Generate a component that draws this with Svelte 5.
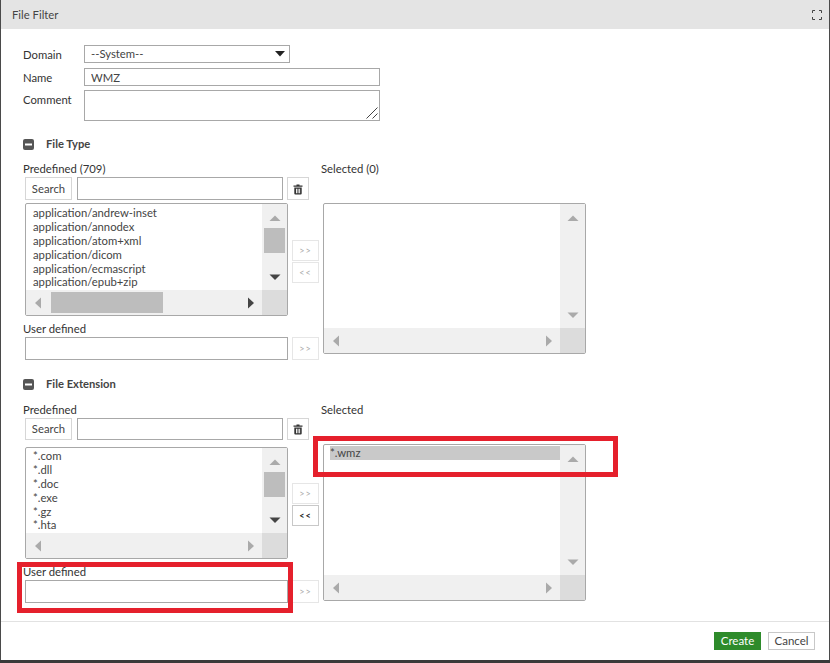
<script>
  const types = ['application/andrew-inset','application/annodex','application/atom+xml','application/dicom','application/ecmascript','application/epub+zip'];
  const exts = ['*.com','*.dll','*.doc','*.exe','*.gz','*.hta'];
</script>

{#snippet tri(dir, tone)}
  <svg class="tri {tone}" viewBox="0 0 12 12" width="12" height="12" aria-hidden="true">
    {#if dir === 'up'}<path d="M0.5 9L11.5 9L6 3.5Z" />
    {:else if dir === 'down'}<path d="M0.5 3.5L11.5 3.5L6 9Z" />
    {:else if dir === 'left'}<path d="M9 0.5L9 11.5L3 6Z" />
    {:else}<path d="M3 0.5L3 11.5L9 6Z" />{/if}
  </svg>
{/snippet}

{#snippet scrollbox(items, sel, vthumb, hthumb, downTone, rightTone, cls)}
  <div class="box {cls}">
    <div class="items">
      {#each items as it}<div class="item">{it}</div>{/each}
      {#if sel}<div class="item sel">{sel}</div>{/if}
    </div>
    <div class="vbar">
      {@render tri('up', 'light')}
      {#if vthumb}<div class="vthumb"></div>{/if}
      <span class="vdown">{@render tri('down', downTone)}</span>
    </div>
    <div class="hbar">
      {@render tri('left', 'light')}
      {#if hthumb}<div class="hthumb"></div>{/if}
      <span class="hright">{@render tri('right', rightTone)}</span>
    </div>
    <div class="corner"></div>
  </div>
{/snippet}

{#snippet trash()}
  <svg viewBox="0 0 12 12" width="12" height="12" aria-hidden="true">
    <path d="M4.5 1.5h3v1h3v1.2h-9V2.500h3z" fill="#333"/>
    <path fill-rule="evenodd" d="M2.300 4.500h7.400v6a1 1 0 0 1-1 1h-5.400a1 1 0 0 1-1-1zM4 5.700v4.500h.9V5.700zM5.600 5.700v4.500h.9V5.700zM7.200 5.700v4.500h.9V5.700z" fill="#333"/>
  </svg>
{/snippet}

{#snippet minus()}
  <svg class="minus" viewBox="0 0 11 11" width="11" height="11" aria-hidden="true">
    <rect width="11" height="11" rx="2" fill="#555"/>
    <rect x="2" y="4.500" width="7" height="2" fill="#fff"/>
  </svg>
{/snippet}

<div class="win">
  <header class="head">
    <span>File Filter</span>
    <svg viewBox="0 0 10 10" width="10" height="10" aria-hidden="true">
      <path d="M0.500 3V0.500H3M7 0.500H9.500V3M9.500 7V9.500H7M3 9.500H0.500V7" fill="none" stroke="#444" stroke-width="1"/>
    </svg>
  </header>

  <main class="body">
    <div class="form">
      <label for="d" class="l1">Domain</label>
      <div class="select" id="d"><span>--System--</span>
        <svg viewBox="0 0 10 6" width="10" height="6" aria-hidden="true"><path d="M0 0H10L5 5.500Z" fill="#222"/></svg>
      </div>
      <label for="n" class="l1">Name</label>
      <input id="n" class="wide" value="WMZ" />
      <label for="c" class="top">Comment</label>
      <div class="area">
        <textarea id="c"></textarea>
        <svg class="grip" viewBox="0 0 12 12" width="12" height="12" aria-hidden="true"><path d="M0.500 11.500L11.500 0.500M6.500 11.500L11.500 6.500" stroke="#444" stroke-width="1" fill="none"/></svg>
      </div>
    </div>

    <h3 class="sec first">{@render minus()}File Type</h3>
    <div class="transfer">
      <div>
        <div class="lab">Predefined (709)</div>
        <div class="search s1">
          <button class="btn">Search</button>
          <input class="q" />
          <button class="btn ic">{@render trash()}</button>
        </div>
        <div class="mid m1">
          {@render scrollbox(types, null, true, true, 'dark', 'dark', 'b1')}
          <div class="arrows a1">
            <button class="arr">&gt;&gt;</button>
            <button class="arr">&lt;&lt;</button>
          </div>
        </div>
        <div class="lab ud">User defined</div>
        <div class="udrow">
          <input class="udin" />
          <button class="arr">&gt;&gt;</button>
        </div>
      </div>
      <div>
        <div class="lab">Selected (0)</div>
        <div class="rbox r1">{@render scrollbox([], null, false, false, 'light', 'light', 'b2')}</div>
      </div>
    </div>

    <h3 class="sec second">{@render minus()}File Extension</h3>
    <div class="transfer">
      <div>
        <div class="lab">Predefined</div>
        <div class="search s2">
          <button class="btn">Search</button>
          <input class="q" />
          <button class="btn ic">{@render trash()}</button>
        </div>
        <div class="mid m2">
          {@render scrollbox(exts, null, true, false, 'dark', 'light', 'b3')}
          <div class="arrows a2">
            <button class="arr">&gt;&gt;</button>
            <button class="arr on">&lt;&lt;</button>
          </div>
        </div>
        <div class="lab ud">User defined</div>
        <div class="udrow">
          <input class="udin" />
          <button class="arr">&gt;&gt;</button>
        </div>
      </div>
      <div>
        <div class="lab">Selected</div>
        <div class="rbox r2">{@render scrollbox([], '*.wmz', false, false, 'light', 'light', 'b4')}</div>
      </div>
    </div>
  </main>

  <footer class="foot">
    <button class="create">Create</button>
    <button class="cancel">Cancel</button>
  </footer>

  <div class="mark m-sel"></div>
  <div class="mark m-ud"></div>
</div>

<style>
  :global(body) { margin: 0; background: #3a3a3a; }
  .win {
    position: relative; box-sizing: border-box; width: 830px; height: 660px;
    background: #fff; border-left: 1px solid #4a4a4a; border-right: 1px solid #4a4a4a;
    display: flex; flex-direction: column;
    font: 11.3px/16px Lato, "Liberation Sans", sans-serif; color: #333;
  }
  .head {
    height: 29px; flex: none; background: #e4e4e4; display: flex; align-items: center;
    justify-content: space-between; padding: 0 7px 0 11px; color: #444;
  }
  .body { flex: 1; padding: 16px 0 0 22px; }
  .form { display: grid; grid-template-columns: 61px 1fr; grid-template-rows: 18px 18px 30px; row-gap: 5px; }
  .form label { height: 18px; line-height: 20px; }
  .form label.top { line-height: 18px; }
  .select {
    box-sizing: border-box; width: 206px; height: 18px; border: 1px solid #a8a8a8;
    display: flex; align-items: center; justify-content: space-between; padding: 0 4px 0 6px; color: #444;
  }
  input, textarea {
    box-sizing: border-box; border: 1px solid #a8a8a8; background: #fff; border-radius: 0; outline: none;
    font: inherit; color: #444; margin: 0; display: block;
  }
  .wide { width: 296px; height: 18px; padding: 0 6px; }
  .area { position: relative; width: 296px; height: 31px; margin-top: -1px; }
  textarea { width: 100%; height: 100%; resize: none; }
  .grip { position: absolute; right: 2px; bottom: 2px; }

  .sec { display: flex; align-items: center; margin: 0; font-size: 11.2px; font-weight: 700; color: #444; line-height: 16px; height: 16px; }
  .minus { margin-right: 12px; }
  .sec.first { margin-top: 15px; }
  .sec.second { margin-top: 16px; }
  .transfer { display: grid; grid-template-columns: 298px 1fr; }
  .transfer > div { min-width: 0; }
  .lab { height: 16px; }
  .sec + .transfer { margin-top: 9px; }
  .sec.second + .transfer { margin-top: 10px; }

  .search { display: flex; margin-left: 2px; }
  .s1 { height: 23px; margin-bottom: 3px; }
  .s2 { height: 22px; margin-bottom: 7px; }
  .btn {
    box-sizing: border-box; width: 47px; height: 100%; border: 1px solid #d6d6d6; background: #fff;
    font: inherit; color: #444; padding: 0; margin-right: 5px;
  }
  .q { width: 206px; height: 100%; margin-right: 4px; }
  .btn.ic { width: 22px; margin: 0; display: flex; align-items: center; justify-content: center; }

  .mid { display: flex; gap: 4px; margin-left: 2px; }
  .arrows { display: flex; flex-direction: column; gap: 1px; }
  .a1 { margin-top: 37px; }
  .a2 { margin-top: 36px; }
  .arr {
    box-sizing: border-box; width: 27px; height: 21px; border: 1px solid #e6e6e6; background: #fff;
    color: #aaa; font: 9px/1 Lato, "Liberation Sans", sans-serif; letter-spacing: 1px; padding: 0;
  }
  .arr.on { border-color: #c8c8c8; color: #222; font-weight: 700; }

  .ud { margin-top: 5px; }
  .udrow { display: flex; gap: 4px; margin: 0 0 0 2px; height: 23px; }
  .udin { width: 263px; height: 100%; }
  .udrow .arr { height: 100%; }

  .rbox { margin: 26px 0 0 2px; }
  .box {
    box-sizing: border-box; width: 263px; border: 1px solid #a8a8a8; border-radius: 2px;
    display: grid; grid-template-columns: minmax(0, 1fr) 25px; grid-template-rows: minmax(0, 1fr) 25px;
  }
  .b1 { height: 113px; }
  .b3 { height: 112px; }
  .b2 { height: 151px; }
  .b4 { height: 157px; }
  .items { padding: 2px 0 0 7px; min-width: 0; overflow: hidden; }
  .b3 .items { padding-top: 1px; }
  .item { height: 13.9px; line-height: 13.9px; white-space: nowrap; color: #444; }
  .b4 .items { padding: 1px 0 0 6px; }
  .item.sel { background: #c9c9c9; height: 14px; }
  .vbar, .hbar { background: #f0f0f0; position: relative; display: flex; }
  .vbar { flex-direction: column; align-items: center; padding-top: 8px; box-sizing: border-box; }
  .hbar { align-items: center; padding-left: 6px; }
  .vthumb { width: 21px; height: 25px; background: #bdbdbd; margin-top: 4px; }
  .vdown { margin-top: auto; margin-bottom: 7px; display: flex; }
  .hthumb { width: 112px; height: 21px; background: #bdbdbd; margin-left: 7px; }
  .hright { margin-left: auto; margin-right: 5px; display: flex; }
  .corner { background: #dcdcdc; }
  .tri { display: block; flex: none; }
  .tri.light { fill: #aaa; }
  .tri.dark { fill: #444; }

  .foot {
    flex: none; height: 39px; border-top: 1px solid #e2e2e2; display: flex; align-items: flex-start;
    justify-content: flex-end; gap: 7px; padding: 10px 14px 0 0; box-sizing: border-box;
  }
  .foot button { box-sizing: border-box; width: 47px; height: 18px; font: 11.5px/1 Lato, "Liberation Sans", sans-serif; padding: 0; }
  .create { background: #2e8b2b; border: 1px solid #2e8b2b; color: #fff; }
  .cancel { background: #fff; border: 1px solid #c8c8c8; color: #444; }

  .mark { position: absolute; box-sizing: border-box; border: 5px solid #e5202c; pointer-events: none; }
  .m-sel { left: 312px; top: 436px; width: 305px; height: 41px; }
  .m-ud { left: 16px; top: 562px; width: 276px; height: 51px; }
</style>
